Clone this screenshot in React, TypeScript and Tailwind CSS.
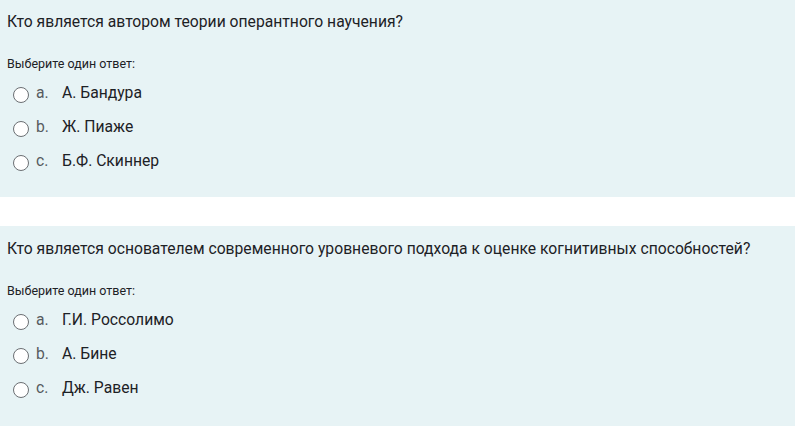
const questions = [
  {
    text: 'Кто является автором теории оперантного научения?',
    answers: ['А. Бандура', 'Ж. Пиаже', 'Б.Ф. Скиннер'],
  },
  {
    text: 'Кто является основателем современного уровневого подхода к оценке когнитивных способностей?',
    answers: ['Г.И. Россолимо', 'А. Бине', 'Дж. Равен'],
  },
];

const letters = ['a.', 'b.', 'c.'];

function Radio() {
  return (
    <span className="mt-[8px] w-[16px] h-[16px] shrink-0 rounded-full border border-[#6b6f73] bg-white" />
  );
}

export default function App() {
  return (
    <div className="w-[795px] h-[446px] bg-white font-['Roboto',sans-serif] text-[#1d2125] overflow-hidden">
      {questions.map((q, i) => (
        <div
          key={i}
          className={`bg-[#e7f3f5] px-[7px] pt-[11px] ${i === 0 ? 'h-[197px]' : 'mt-[29px] h-[200px] pt-[12px]'}`}
        >
          <div className="text-[15.7px] leading-[22px]">{q.text}</div>
          <div className="mt-[25px] mb-[9px] text-[12.5px] leading-[12px]">Выберите один ответ:</div>
          <div className="flex flex-col gap-[6px]">
            {q.answers.map((a, j) => (
              <div key={j} className="flex items-start h-[28px] text-[15.7px] leading-[28px] pl-[6px]">
                <Radio />
                <span className="ml-[7px] w-[26px] text-[#565b60]">{letters[j]}</span>
                <span>{a}</span>
              </div>
            ))}
          </div>
        </div>
      ))}
    </div>
  );
}
